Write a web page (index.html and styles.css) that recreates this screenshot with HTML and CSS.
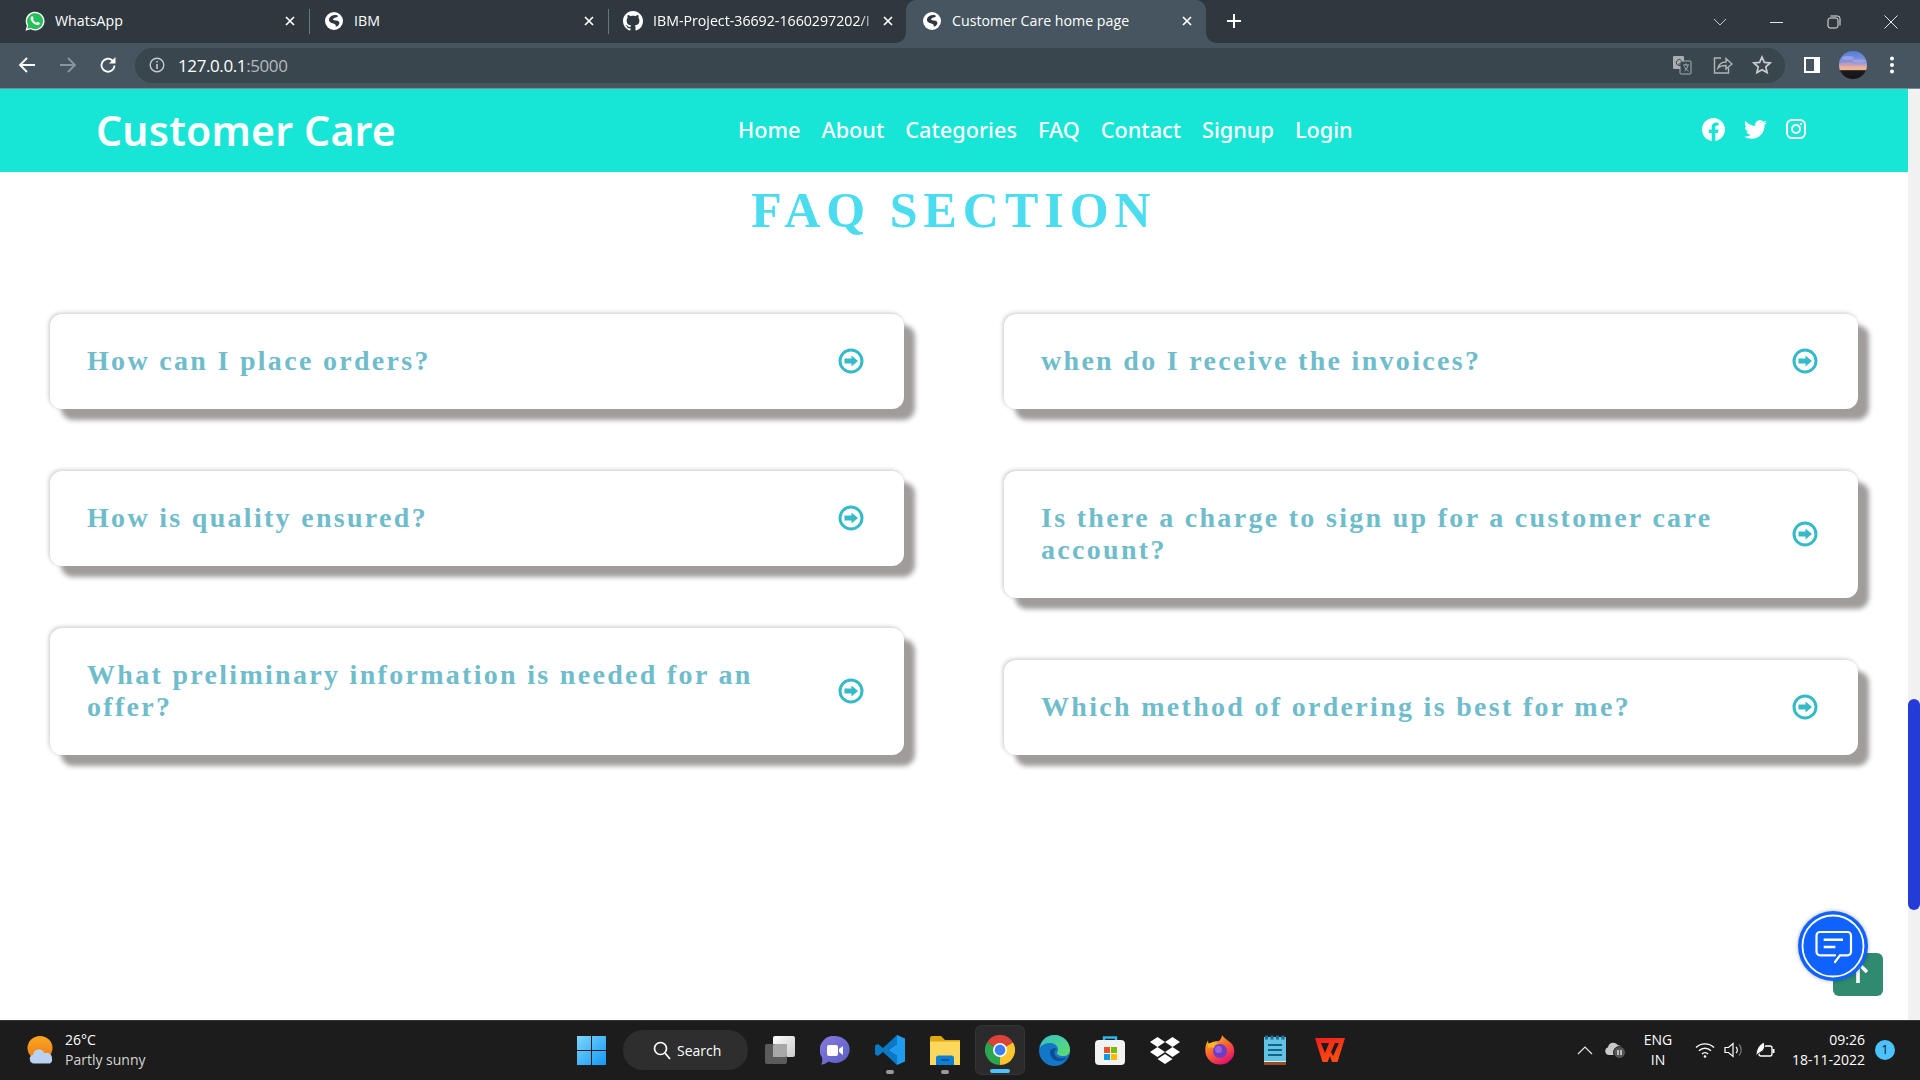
FILE: index.html
```html
<!DOCTYPE html>
<html lang="en">
<head>
<meta charset="utf-8">
<title>Customer Care home page</title>
<link rel="stylesheet" href="styles.css">
</head>
<body>
<svg class="defs" width="0" height="0" aria-hidden="true">
  <defs>
    <symbol id="globe" viewBox="0 0 20 20">
      <circle cx="10" cy="10" r="10" fill="#fff"/>
      <path d="M4.500 7.500C5.500 4.500 9.500 2.500 13.500 3.500c1 .5 1 1.500 0 2-1.500.7-4.500 1-4.500 2.500 0 1.500 3 1 5 1.800 2 .8 2.500 2.500 1.500 4-.8 1.200-2 2-3.500 2.700.3-1.500-.2-3-2-3.500-2-.6-4-1-5-2.500-.6-.9-.8-2-.5-3z" fill="#2f383f"/>
    </symbol>
    <symbol id="xmark" viewBox="0 0 12 12">
      <path d="M2 2l8 8M10 2l-8 8" stroke="#fff" stroke-width="1.700" fill="none"/>
    </symbol>
    <symbol id="go" viewBox="0 0 26 26">
      <circle cx="13" cy="13" r="11" fill="#fff" stroke="#35bac9" stroke-width="3"/>
      <path d="M6.500 10.500h7V7.500l6.500 5.500-6.500 5.500v-3h-7z" fill="#35bac9"/>
    </symbol>
  </defs>
</svg>

<header class="browser">
  <div class="tabstrip">
    <div class="tabs">
      <div class="tab sep">
        <span class="favicon">
          <svg width="22" height="22" viewBox="0 0 22 22"><path d="M1.500 20.700l1.400-5A9.400 9.400 0 1 1 6.500 19.300z" fill="#fff"/><path d="M3.300 18.800l1-3.400a8 8 0 1 1 2.500 2.500z" fill="#25c05a"/><path d="M8.300 6.200c-.4 0-1 .2-1.400 1-.6 1.100-.4 2.300.4 3.500 1 1.600 2.300 3 4.300 3.900 1.600.7 2.400.6 3.200.1.800-.5 1-1.300 1-1.800l-2.200-1.200-1 1.100c-1.500-.5-2.800-1.700-3.600-3.200l.7-1-1-2.400z" fill="#fff"/></svg>
        </span>
        <span class="tab-title">WhatsApp</span>
        <svg class="tab-close" width="12" height="12"><use href="#xmark"/></svg>
      </div>
      <div class="tab sep">
        <span class="favicon"><svg width="18" height="18"><use href="#globe"/></svg></span>
        <span class="tab-title">IBM</span>
        <svg class="tab-close" width="12" height="12"><use href="#xmark"/></svg>
      </div>
      <div class="tab">
        <span class="favicon"><svg width="20" height="20" viewBox="0 0 16 16"><path fill="#fff" d="M8 0C3.580 0 0 3.580 0 8c0 3.540 2.290 6.530 5.470 7.590.4.070.55-.17.55-.38 0-.19-.01-.82-.01-1.490-2.010.37-2.530-.49-2.690-.94-.09-.23-.48-.94-.82-1.130-.28-.15-.68-.52-.01-.53.63-.01 1.080.58 1.230.82.72 1.210 1.870.87 2.330.66.07-.52.28-.87.51-1.070-1.780-.2-3.640-.89-3.640-3.950 0-.87.31-1.590.82-2.150-.08-.2-.36-1.020.08-2.120 0 0 .67-.21 2.200.82.64-.18 1.320-.27 2-.27.68 0 1.360.09 2 .27 1.530-1.040 2.200-.82 2.200-.82.44 1.100.16 1.920.08 2.120.51.56.82 1.270.82 2.150 0 3.070-1.870 3.750-3.650 3.950.29.25.54.73.54 1.480 0 1.070-.01 1.930-.01 2.200 0 .21.15.46.55.38A8.013 8.013 0 0 0 16 8c0-4.420-3.580-8-8-8z"/></svg></span>
        <span class="tab-title tab-fade">IBM-Project-36692-1660297202/I</span>
        <svg class="tab-close" width="12" height="12"><use href="#xmark"/></svg>
      </div>
      <div class="tab tab-active">
        <span class="favicon"><svg width="18" height="18"><use href="#globe"/></svg></span>
        <span class="tab-title">Customer Care home page</span>
        <svg class="tab-close" width="12" height="12"><use href="#xmark"/></svg>
      </div>
      <svg class="newtab" width="16" height="16" viewBox="0 0 16 16"><path d="M8 1v14M1 8h14" stroke="#fff" stroke-width="2"/></svg>
    </div>
    <div class="winctl">
      <svg class="win-chev" width="14" height="8" viewBox="0 0 14 8"><path d="M1 1l6 6 6-6" stroke="#c8ccce" fill="none"/></svg>
      <svg class="win-btn" width="14" height="14" viewBox="0 0 14 14"><path d="M0 7.500h13" stroke="#e8e8e8"/></svg>
      <svg class="win-btn" width="14" height="14" viewBox="0 0 14 14"><rect x="1" y="3" width="10" height="10" rx="2" fill="none" stroke="#e8e8e8"/><path d="M3.500 1h7a2.500 2.500 0 0 1 2.500 2.500v7" fill="none" stroke="#e8e8e8"/></svg>
      <svg class="win-btn" width="14" height="14" viewBox="0 0 14 14"><path d="M.5.500l13 13M13.500.500l-13 13" stroke="#e8e8e8" fill="none"/></svg>
    </div>
  </div>
  <div class="toolbar">
    <div class="nav-btns">
      <svg width="18" height="18" viewBox="0 0 18 18"><path d="M17 9H2M9 2L2 9l7 7" stroke="#fff" stroke-width="1.800" fill="none"/></svg>
      <svg width="18" height="18" viewBox="0 0 18 18"><path d="M1 9h15M9 2l7 7-7 7" stroke="#8b959b" stroke-width="1.800" fill="none"/></svg>
      <svg width="18" height="18" viewBox="0 0 18 18"><path d="M15.500 9.500a6.500 6.500 0 1 1-2-5l2.200 2" stroke="#fff" stroke-width="1.800" fill="none"/><path d="M16.500 1v6.500H10z" fill="#fff"/></svg>
    </div>
    <div class="urlbar">
      <svg class="url-info" width="16" height="16" viewBox="0 0 16 16"><circle cx="8" cy="8" r="6.800" fill="none" stroke="#c5cacd" stroke-width="1.400"/><path d="M8 7v5M8 4v1.600" stroke="#c5cacd" stroke-width="1.600"/></svg>
      <span class="url-text">127.0.0.1<span class="url-dim">:5000</span></span>
      <div class="url-actions">
        <svg width="20" height="20" viewBox="0 0 20 20"><rect x="1" y="1" width="11" height="13" rx="1" fill="#a9aeb1"/><rect x="8" y="6" width="11" height="13" rx="1" fill="#3a464e" stroke="#a9aeb1"/><path d="M9.500 5.500a3 3 0 1 0 .4 3.500H6.500" stroke="#3a464e" stroke-width="1" fill="none"/><path d="M11 10h6M14 8.500v1.500M12.500 16c2-1.500 3-3.500 3.500-6M12.500 11.500c.8 2 2 3.500 4 4.500" stroke="#a9aeb1" stroke-width="1" fill="none"/></svg>
        <svg class="url-share" width="20" height="20" viewBox="0 0 20 20"><path d="M8 3H1.500v15h14v-5" stroke="#b0b5b8" stroke-width="1.400" fill="none"/><path d="M5 13c1-4 4-6 8-6V3.500l6 5.500-6 5v-3.500c-3 0-6 .5-8 2.500z" stroke="#b0b5b8" stroke-width="1.400" fill="none"/></svg>
        <svg width="20" height="20" viewBox="0 0 20 20"><path d="M10 2l2.400 5.400 5.800.6-4.400 3.900 1.300 5.700L10 14.700l-5.100 2.900 1.300-5.700L1.800 8l5.800-.6z" stroke="#c9cdcf" stroke-width="1.700" fill="none"/></svg>
      </div>
    </div>
    <div class="tool-right">
      <svg width="18" height="18" viewBox="0 0 18 18"><rect x="1" y="1" width="16" height="16" fill="#fff"/><rect x="3" y="3" width="8" height="12" fill="#46555f"/></svg>
      <svg class="avatar" width="28" height="28" viewBox="0 0 28 28">
        <defs>
          <linearGradient id="sky" x1="0" y1="0" x2="0" y2="1">
            <stop offset="0" stop-color="#4f7fd8"/><stop offset=".42" stop-color="#8a96dc"/><stop offset=".58" stop-color="#f0b09a"/><stop offset=".68" stop-color="#eeb98f"/><stop offset=".7" stop-color="#1c1a1e"/><stop offset="1" stop-color="#141414"/>
          </linearGradient>
          <clipPath id="avclip"><circle cx="14" cy="14" r="14"/></clipPath>
        </defs>
        <circle cx="14" cy="14" r="14" fill="url(#sky)"/>
        <g clip-path="url(#avclip)" fill="#a9a6e6" opacity=".75">
          <ellipse cx="9" cy="7" rx="6" ry="2"/><ellipse cx="20" cy="10" rx="7" ry="1.800"/><ellipse cx="8" cy="13" rx="7" ry="1.500" fill="#d59ab0"/>
        </g>
      </svg>
      <svg width="6" height="18" viewBox="0 0 6 18"><circle cx="3" cy="2.500" r="2" fill="#fff"/><circle cx="3" cy="9" r="2" fill="#fff"/><circle cx="3" cy="15.500" r="2" fill="#fff"/></svg>
    </div>
  </div>
</header>

<div class="viewport">
  <div class="page">
    <nav class="navbar">
      <a class="brand">Customer Care</a>
      <ul class="menu">
        <li>Home</li><li>About</li><li>Categories</li><li>FAQ</li><li>Contact</li><li>Signup</li><li>Login</li>
      </ul>
      <div class="social">
        <svg width="23" height="23" viewBox="0 0 24 24"><path fill="#fff" d="M24 12.070C24 5.400 18.630 0 12 0S0 5.400 0 12.070c0 6.030 4.390 11.030 10.130 11.930v-8.440H7.080v-3.490h3.050V9.410c0-3.030 1.790-4.700 4.530-4.700 1.310 0 2.680.24 2.680.24v2.970h-1.510c-1.490 0-1.960.93-1.960 1.880v2.270h3.330l-.53 3.490h-2.800V24C19.610 23.100 24 18.100 24 12.070z"/></svg>
        <svg width="23" height="23" viewBox="0 0 24 24"><path fill="#fff" d="M23.953 4.570a10 10 0 0 1-2.825.775 4.958 4.958 0 0 0 2.163-2.723c-.951.555-2.005.959-3.127 1.184a4.920 4.920 0 0 0-8.384 4.482C7.690 8.095 4.067 6.130 1.640 3.162a4.822 4.822 0 0 0-.666 2.475c0 1.710.870 3.213 2.188 4.096a4.904 4.904 0 0 1-2.228-.616v.06a4.923 4.923 0 0 0 3.946 4.827 4.996 4.996 0 0 1-2.212.085 4.936 4.936 0 0 0 4.604 3.417 9.867 9.867 0 0 1-6.102 2.105c-.39 0-.779-.023-1.170-.067a13.995 13.995 0 0 0 7.557 2.209c9.053 0 13.998-7.496 13.998-13.985 0-.21 0-.42-.015-.63A9.935 9.935 0 0 0 24 4.590z"/></svg>
        <svg width="20" height="20" viewBox="0 0 20 20"><rect x="1" y="1" width="18" height="18" rx="5" fill="none" stroke="#fff" stroke-width="2"/><circle cx="10" cy="10" r="4" fill="none" stroke="#fff" stroke-width="2"/><circle cx="15" cy="5" r="1.200" fill="#fff"/></svg>
      </div>
    </nav>

    <main class="faq">
      <h1 class="faq-title">FAQ SECTION</h1>
      <div class="faq-grid">
        <div class="faq-col">
          <article class="faq-card"><h2 class="faq-q">How can I place orders?</h2><svg class="faq-go" width="26" height="26"><use href="#go"/></svg></article>
          <article class="faq-card"><h2 class="faq-q">How is quality ensured?</h2><svg class="faq-go" width="26" height="26"><use href="#go"/></svg></article>
          <article class="faq-card"><h2 class="faq-q">What preliminary information is needed for an offer?</h2><svg class="faq-go" width="26" height="26"><use href="#go"/></svg></article>
        </div>
        <div class="faq-col">
          <article class="faq-card"><h2 class="faq-q">when do I receive the invoices?</h2><svg class="faq-go" width="26" height="26"><use href="#go"/></svg></article>
          <article class="faq-card"><h2 class="faq-q">Is there a charge to sign up for a customer care account?</h2><svg class="faq-go" width="26" height="26"><use href="#go"/></svg></article>
          <article class="faq-card"><h2 class="faq-q">Which method of ordering is best for me?</h2><svg class="faq-go" width="26" height="26"><use href="#go"/></svg></article>
        </div>
      </div>
    </main>

    <a class="to-top"><svg width="20" height="24" viewBox="0 0 20 24"><path d="M10 24V4M1 13l9-9 9 9" stroke="#fff" stroke-width="3.600" fill="none"/></svg></a>
    <a class="chat-fab">
      <svg width="70" height="70" viewBox="0 0 70 70">
        <circle cx="35" cy="35" r="30.500" fill="none" stroke="#fff" stroke-width="1.800"/>
        <path d="M37 44.300H22a3.500 3.500 0 0 1-3.500-3.500V24.500A3.500 3.500 0 0 1 22 21h27.500a3.500 3.500 0 0 1 3.500 3.500v16.300a3.500 3.500 0 0 1-3.500 3.500h-7.500L37 51" fill="none" stroke="#fff" stroke-width="2.200" stroke-linecap="round"/>
        <path d="M25.700 28.700H45M25.700 36h11.600" stroke="#fff" stroke-width="2.400"/>
      </svg>
    </a>
  </div>
  <div class="scrollbar"><div class="scroll-thumb"></div></div>
</div>

<footer class="taskbar">
  <div class="weather">
    <svg width="28" height="28" viewBox="0 0 28 28">
      <defs><linearGradient id="sun" x1="0" y1="0" x2="0" y2="1"><stop offset="0" stop-color="#f9a825"/><stop offset="1" stop-color="#ef7a10"/></linearGradient></defs>
      <ellipse cx="13" cy="12" rx="12.500" ry="12" fill="url(#sun)"/>
      <path d="M7 27.500a4.500 4.500 0 0 1-1-8.800 6 6 0 0 1 11.500-1.500 5.300 5.300 0 0 1 7.500 5.500 4.500 4.500 0 0 1-2 4.800z" fill="#b9d2f4"/>
    </svg>
    <div class="weather-text"><span class="temp">26°C</span><span class="cond">Partly sunny</span></div>
  </div>
  <div class="apps">
    <svg class="app-start" width="29" height="29" viewBox="0 0 29 29">
      <defs><linearGradient id="win" x1="0" y1="0" x2="1" y2="1"><stop offset="0" stop-color="#7dd6fb"/><stop offset="1" stop-color="#1298f5"/></linearGradient></defs>
      <path d="M0 0h14v14H0zM15 0h14v14H15zM0 15h14v14H0zM15 15h14v14H15z" fill="url(#win)"/>
    </svg>
    <div class="search-pill">
      <svg width="18" height="19" viewBox="0 0 18 19"><circle cx="7.500" cy="7.500" r="6" fill="none" stroke="#fff" stroke-width="1.700"/><path d="M12 12l5 6" stroke="#fff" stroke-width="1.700"/></svg>
      <span>Search</span>
    </div>
    <span class="app">
      <svg width="30" height="28" viewBox="0 0 30 28">
        <defs><linearGradient id="tv" x1="0" y1="0" x2="1" y2="1"><stop offset="0" stop-color="#fff"/><stop offset="1" stop-color="#c9c9c9"/></linearGradient></defs>
        <rect x="8" y="0" width="22" height="21" rx="2" fill="url(#tv)"/>
        <rect x="0" y="8" width="22" height="20" rx="2" fill="#5b5b5b"/>
        <path d="M8 10a2 2 0 0 1 2-2h12v11a2 2 0 0 1-2 2H8z" fill="#a8a8a8"/>
      </svg>
    </span>
    <span class="app">
      <svg width="30" height="29" viewBox="0 0 30 29">
        <defs><linearGradient id="teams" x1="0" y1="0" x2="1" y2="1"><stop offset="0" stop-color="#8a78de"/><stop offset="1" stop-color="#5560c4"/></linearGradient></defs>
        <path d="M15.500 0a14.500 13.500 0 1 1-7 25.500C6 27.500 3 29 1 28.500c1.500-1.500 1.500-4.500 1-7A14 14 0 0 1 15.500 0z" fill="url(#teams)"/>
        <rect x="7" y="9" width="11" height="11" rx="2" fill="#fff"/><path d="M19 13l4-3v9l-4-3z" fill="#fff"/>
      </svg>
    </span>
    <span class="app has-dot">
      <svg width="30" height="30" viewBox="0 0 30 30"><path d="M22 0l8 3.500v23L22 30V21L13 15l9-6z" fill="#1f9cf0"/><path d="M22 0L8 13 3 9 0 10.500v9L3 21l5-4 14 13 .2-9L13 15l9-6z" fill="#0b79c6"/></svg>
    </span>
    <span class="app has-dot">
      <svg width="30" height="29" viewBox="0 0 30 29"><path d="M0 2a2 2 0 0 1 2-2h9l4 4h15v25H0z" fill="#e2a60e"/><path d="M0 5.500h30V29H0z" fill="#fbd75b"/><path d="M6 22a2.500 2.500 0 0 1 2.500-2.500h13A2.500 2.500 0 0 1 24 22v7H6z" fill="#0f7fd6"/><path d="M11 24h8" stroke="#0a4f8a" stroke-width="1.500"/></svg>
    </span>
    <span class="app app-on has-bar">
      <svg width="30" height="30" viewBox="0 0 30 30">
        <path d="M15 15L2 7.500A15 15 0 0 1 28 7.500z" fill="#dd4237"/>
        <path d="M15 15L28 7.500A15 15 0 0 1 15 30z" fill="#fbc62d"/>
        <path d="M15 15L15 30A15 15 0 0 1 2 7.500z" fill="#2da44e"/>
        <circle cx="15" cy="15" r="7" fill="#fff"/><circle cx="15" cy="15" r="5.400" fill="#3b7ff0"/>
      </svg>
    </span>
    <span class="app">
      <svg width="31" height="31" viewBox="0 0 31 31">
        <defs><linearGradient id="edge" x1="0" y1="0" x2="1" y2="1"><stop offset="0" stop-color="#34c1c4"/><stop offset="1" stop-color="#5fdd6b"/></linearGradient></defs>
        <circle cx="15.500" cy="15.500" r="15.500" fill="#1377c8"/>
        <path d="M1 13C2 5 8 0 15.500 0 24 0 31 7 31 15c0 4-3 6-7 6-3 0-6-1-6-3 0-1 1-1.500 1-3.500 0-4-4-6.500-8-6.500-4.500 0-8.500 2-10 5z" fill="url(#edge)"/>
        <path d="M11 17c0 5 4 9 9 9 3 0 6-1.500 8-3.500-3 1-9 1.500-11.500-1.500-2-2.500-1-6 1-7.500-3-1-6.500.5-6.500 3.500z" fill="#0d4d95"/>
      </svg>
    </span>
    <span class="app">
      <svg width="30" height="30" viewBox="0 0 30 30"><path d="M9 8V2.500h12V8" stroke="#2bb7ee" stroke-width="2.400" fill="none"/><rect x="0" y="5" width="30" height="25" rx="4" fill="#f2f2f2"/><rect x="9" y="12" width="6" height="6" fill="#e8532b"/><rect x="16" y="12" width="6" height="6" fill="#7fba00"/><rect x="9" y="19" width="6" height="6" fill="#0a9be8"/><rect x="16" y="19" width="6" height="6" fill="#ffb900"/></svg>
    </span>
    <span class="app">
      <svg width="30" height="27" viewBox="0 0 30 27"><path d="M7.500 0l7.500 5-7.500 5L0 5zM22.500 0L30 5l-7.500 5L15 5zM7.500 10l7.500 5-7.500 5L0 15zM22.500 10l7.500 5-7.500 5-7.500-5zM15 17l7.500 5-7.500 5-7.500-5z" fill="#fff"/></svg>
    </span>
    <span class="app">
      <svg width="30" height="30" viewBox="0 0 30 30">
        <defs><linearGradient id="fx" x1="0" y1="0" x2=".6" y2="1"><stop offset="0" stop-color="#ffd028"/><stop offset=".5" stop-color="#ff6a2a"/><stop offset="1" stop-color="#e3146c"/></linearGradient></defs>
        <path d="M17 0c1.500 3 6 5 9 8 4 4 4 10 2 14a15 15 0 0 1-27-2C-.5 15 .5 9 3 5.500c0 2 .5 3 2 4 2-3 6-4 9-3.500 1.500-1.500 3-3.500 3-6z" fill="url(#fx)"/>
        <circle cx="15" cy="16" r="7" fill="#6e3cc7"/><circle cx="13.500" cy="14.500" r="3.500" fill="#9a5fe0"/>
        <path d="M3 9c3-2 7-2.500 10-1-3 1-4 3-4 5-2-1-4-1-6 0z" fill="#ffb52b"/>
      </svg>
    </span>
    <span class="app">
      <svg width="22" height="30" viewBox="0 0 22 30"><rect x="0" y="2" width="22" height="24" fill="#62c2e4"/><rect x="0" y="27" width="22" height="3" fill="#8f5128"/><rect x="0" y="26" width="22" height="1" fill="#e8e8e8"/><path d="M1 2.500h20" stroke="#1d6f93" stroke-width="4" stroke-dasharray="3 2.500"/><path d="M4 10h14M4 15h14M4 20h14" stroke="#14648a" stroke-width="2"/></svg>
    </span>
    <span class="app">
      <svg width="30" height="24" viewBox="0 0 30 24">
        <defs><linearGradient id="wps" x1="0" y1="0" x2=".5" y2="1"><stop offset="0" stop-color="#f01d1d"/><stop offset="1" stop-color="#ff4e12"/></linearGradient></defs>
        <path fill-rule="evenodd" d="M0 0H30L22.500 24H17L15 18 12.500 24H7.500ZM6 5L10 15 14 5ZM20 5L16 14 18 18 24 5Z" fill="url(#wps)"/>
      </svg>
    </span>
  </div>
  <div class="tray">
    <svg width="16" height="9" viewBox="0 0 16 9"><path d="M1 8l7-7 7 7" stroke="#e6e6e6" stroke-width="1.200" fill="none"/></svg>
    <svg class="tray-cloud" width="21" height="18" viewBox="0 0 21 18"><path d="M4 14a4 4 0 0 1-1-7.800 5.500 5.500 0 0 1 10-2A4 4 0 0 1 17 10v4z" fill="#c9c9c9"/><circle cx="14.500" cy="11.500" r="6" fill="#555" stroke="#1c1c1c"/><path d="M13 9v5M16 9v5" stroke="#fff" stroke-width="1.200"/></svg>
    <div class="tray-lang"><span>ENG</span><span>IN</span></div>
    <svg class="tray-wifi" width="20" height="16" viewBox="0 0 20 16"><path d="M1 5.500a13 13 0 0 1 18 0M4 8.800a8.500 8.500 0 0 1 12 0M7 12a4 4 0 0 1 6 0" stroke="#fff" stroke-width="1.400" fill="none"/><circle cx="10" cy="14.500" r="1.300" fill="#fff"/></svg>
    <svg class="tray-vol" width="20" height="16" viewBox="0 0 20 16"><path d="M1 5.500h3.500L9 1.500v13l-4.500-4H1z" fill="none" stroke="#fff" stroke-width="1.200"/><path d="M12 5a4 4 0 0 1 0 6" stroke="#fff" stroke-width="1.200" fill="none"/><path d="M15 2.500a8 8 0 0 1 0 11" stroke="#777" stroke-width="1.200" fill="none"/></svg>
    <svg class="tray-bat" width="20" height="18" viewBox="0 0 20 18"><rect x="4" y="5" width="13" height="10" rx="2" fill="none" stroke="#fff" stroke-width="1.300"/><rect x="17.500" y="8" width="2" height="4" fill="#fff"/><path d="M1 15C1 8 4 4 9 1c1 4 1 8-3 10-1.500 1-4 2-5 4z" fill="#fff" stroke="#1c1c1c"/></svg>
    <div class="tray-clock"><span>09:26</span><span>18-11-2022</span></div>
    <span class="tray-badge">1</span>
  </div>
</footer>
</body>
</html>
```

FILE: styles.css
```css
* { box-sizing: border-box; }
html, body { margin: 0; height: 100%; }
body {
  width: 1920px;
  height: 1080px;
  overflow: hidden;
  display: flex;
  flex-direction: column;
  font-family: "Open Sans", "Noto Sans", sans-serif;
  background: #fff;
}
.defs { position: absolute; }

/* browser frame */
.browser { flex: 0 0 89px; display: flex; flex-direction: column; background: #46555f; border-bottom: 1px solid #7d8a91; }
.tabstrip { flex: 0 0 43px; display: flex; justify-content: space-between; background: #2f383f; }
.tabs { display: flex; align-items: stretch; padding-left: 11px; }
.tab {
  position: relative;
  width: 299px;
  display: flex;
  align-items: center;
  padding: 0 14px 2px 13px;
  color: #fff;
  font-size: 14.200px;
}
.sep::after { content: ""; position: absolute; right: 0; top: 9px; height: 25px; width: 1px; background: #6b757c; }
.tab-active { background: #46555f; border-radius: 10px 10px 0 0; width: 300px; margin-left: -2px; padding-left: 15px; padding-right: 13px; }
.tab-active::before, .tab-active::after { content: ""; position: absolute; bottom: 0; width: 10px; height: 10px; }
.tab-active::before { left: -10px; background: radial-gradient(circle at 0 0, transparent 9.500px, #46555f 10px); }
.tab-active::after { right: -10px; background: radial-gradient(circle at 100% 0, transparent 9.500px, #46555f 10px); }
.favicon { flex: 0 0 22px; display: flex; justify-content: center; align-items: center; margin-right: 9px; }
.tab-title { flex: 1; white-space: nowrap; overflow: hidden; padding-right: 8px; }
.tab-fade { mask-image: linear-gradient(90deg, #000 90%, transparent 100%); }
.tab-close { flex: 0 0 12px; }
.newtab { align-self: center; margin-left: 20px; margin-bottom: 2px; }
.winctl { display: flex; align-items: center; padding-right: 22px; }
.win-chev { margin-right: 43px; }
.win-btn { margin-left: 43px; }
.win-chev + .win-btn { margin-left: 0; }

.toolbar { flex: 1; display: flex; align-items: center; }
.nav-btns { flex: 0 0 135px; display: flex; gap: 22.500px; padding: 0 0 1px 18px; }
.urlbar {
  flex: 0 0 1650px;
  height: 35px;
  display: flex;
  align-items: center;
  padding: 0 13px 1px 14px;
  background: #3a464e;
  border-radius: 18px;
}
.url-info { margin-right: 13px; }
.url-text { font-size: 17px; letter-spacing: -.4px; color: #fff; }
.url-dim { color: #b4babd; }
.url-actions { margin-left: auto; display: flex; gap: 20px; }
.url-share { margin-left: 1px; margin-right: -1px; }
.tool-right { flex: 1; display: flex; align-items: center; padding: 0 0 1px 18px; }
.avatar { margin-left: 18px; }
.tool-right svg:last-child { margin-left: 22px; }

/* page */
.viewport { flex: 1; display: flex; min-height: 0; }
.page { position: relative; flex: 1; min-width: 0; background: #fff; }
.scrollbar { flex: 0 0 12px; position: relative; background: #f1f1f1; }
.scroll-thumb { position: absolute; top: 610px; left: 0; right: 0; height: 211px; background: #253bd8; border-radius: 6px; }

.navbar { height: 83px; display: flex; align-items: center; background: #17e6d6; padding: 0 102px 2px 96px; color: #fff; }
.brand { flex: 0 0 642px; font-family: "Noto Sans", sans-serif; font-weight: 600; font-size: 41px; letter-spacing: .2px; }
.menu { display: flex; gap: 21px; margin: 0; padding: 0; list-style: none; font-family: "Noto Sans", sans-serif; font-weight: 500; font-size: 21.700px; }
.social { margin-left: auto; display: flex; align-items: center; gap: 19px; margin-top: -1px; }

.faq { padding: 1px 0 0 50px; }
.faq-title {
  margin: 0 0 66px -50px;
  text-align: center;
  font-family: "Liberation Serif", serif;
  font-weight: 700;
  font-size: 50px;
  line-height: 75px;
  letter-spacing: 6px;
  color: #4bdcf0;
}
.faq-grid { display: grid; grid-template-columns: 854px 854px; column-gap: 100px; }
.faq-col { display: flex; flex-direction: column; gap: 62px; }
.faq-card {
  display: flex;
  align-items: center;
  justify-content: space-between;
  padding: 31px 40px 32px 37px;
  background: #fff;
  border-radius: 12px;
  box-shadow: 11px 11px 5px #a09c9c, -1px -1px 4px rgba(0,0,0,.22);
}
.faq-q {
  flex: 0 1 700px;
  margin: 0;
  font-family: "Liberation Serif", serif;
  font-weight: 700;
  font-size: 28px;
  line-height: 32px;
  letter-spacing: 2.300px;
  color: #6fbccb;
}
.faq-go { flex: 0 0 26px; }

.to-top { position: absolute; left: 1833px; top: 864px; width: 50px; height: 43px; display: flex; justify-content: center; align-items: flex-end; padding-bottom: 13px; background: #2f8a70; border-radius: 6px; }
.chat-fab { position: absolute; left: 1798px; top: 822px; width: 70px; height: 70px; border-radius: 50%; background: #0f62fe; box-shadow: 0 0 4px rgba(0,0,0,.3); display: flex; }

/* taskbar */
.taskbar { flex: 0 0 60px; display: flex; align-items: center; padding-bottom: 1px; background: #1c1c1c; border-top: 1px solid #353535; color: #fff; font-size: 14px; }
.weather { flex: 0 0 577px; display: flex; align-items: center; padding-left: 27px; gap: 10px; }
.weather-text { display: flex; flex-direction: column; line-height: 20px; }
.cond { color: #d5d5d5; }
.apps { flex: 0 0 785px; display: flex; align-items: center; }
.app-start { margin-right: 17px; }
.search-pill { width: 125px; height: 40px; margin-right: 4px; border-radius: 20px; background: #2e2e2e; display: flex; align-items: center; padding-left: 30px; gap: 6px; font-size: 14px; }
.app { position: relative; flex: 0 0 55px; height: 50px; display: flex; align-items: center; justify-content: center; border-radius: 6px; }
.app-on { background: #2b2b2b; flex-basis: 50px; margin: 0 2.500px; border: 1px solid #343434; }
.has-dot::after, .has-bar::after { content: ""; position: absolute; bottom: 1px; left: 50%; height: 4px; border-radius: 2px; }
.has-dot::after { width: 8px; margin-left: -4px; background: #9a9a9a; }
.has-bar::after { width: 20px; margin-left: -10px; background: #4cc2ff; }
.tray { flex: 1; display: flex; align-items: center; padding-left: 215px; }
.tray-cloud { margin-left: 12px; }
.tray-lang { width: 44px; margin-left: 10px; display: flex; flex-direction: column; align-items: center; line-height: 20px; }
.tray-wifi { margin-left: 15px; }
.tray-vol { margin-left: 9px; }
.tray-bat { margin-left: 11px; }
.tray-clock { margin-left: 0; width: 90px; display: flex; flex-direction: column; align-items: flex-end; line-height: 20px; }
.tray-badge { margin-left: 10px; width: 20px; height: 20px; border-radius: 50%; background: #4cc2ff; color: #111; font-size: 12px; line-height: 20px; text-align: center; }
```
